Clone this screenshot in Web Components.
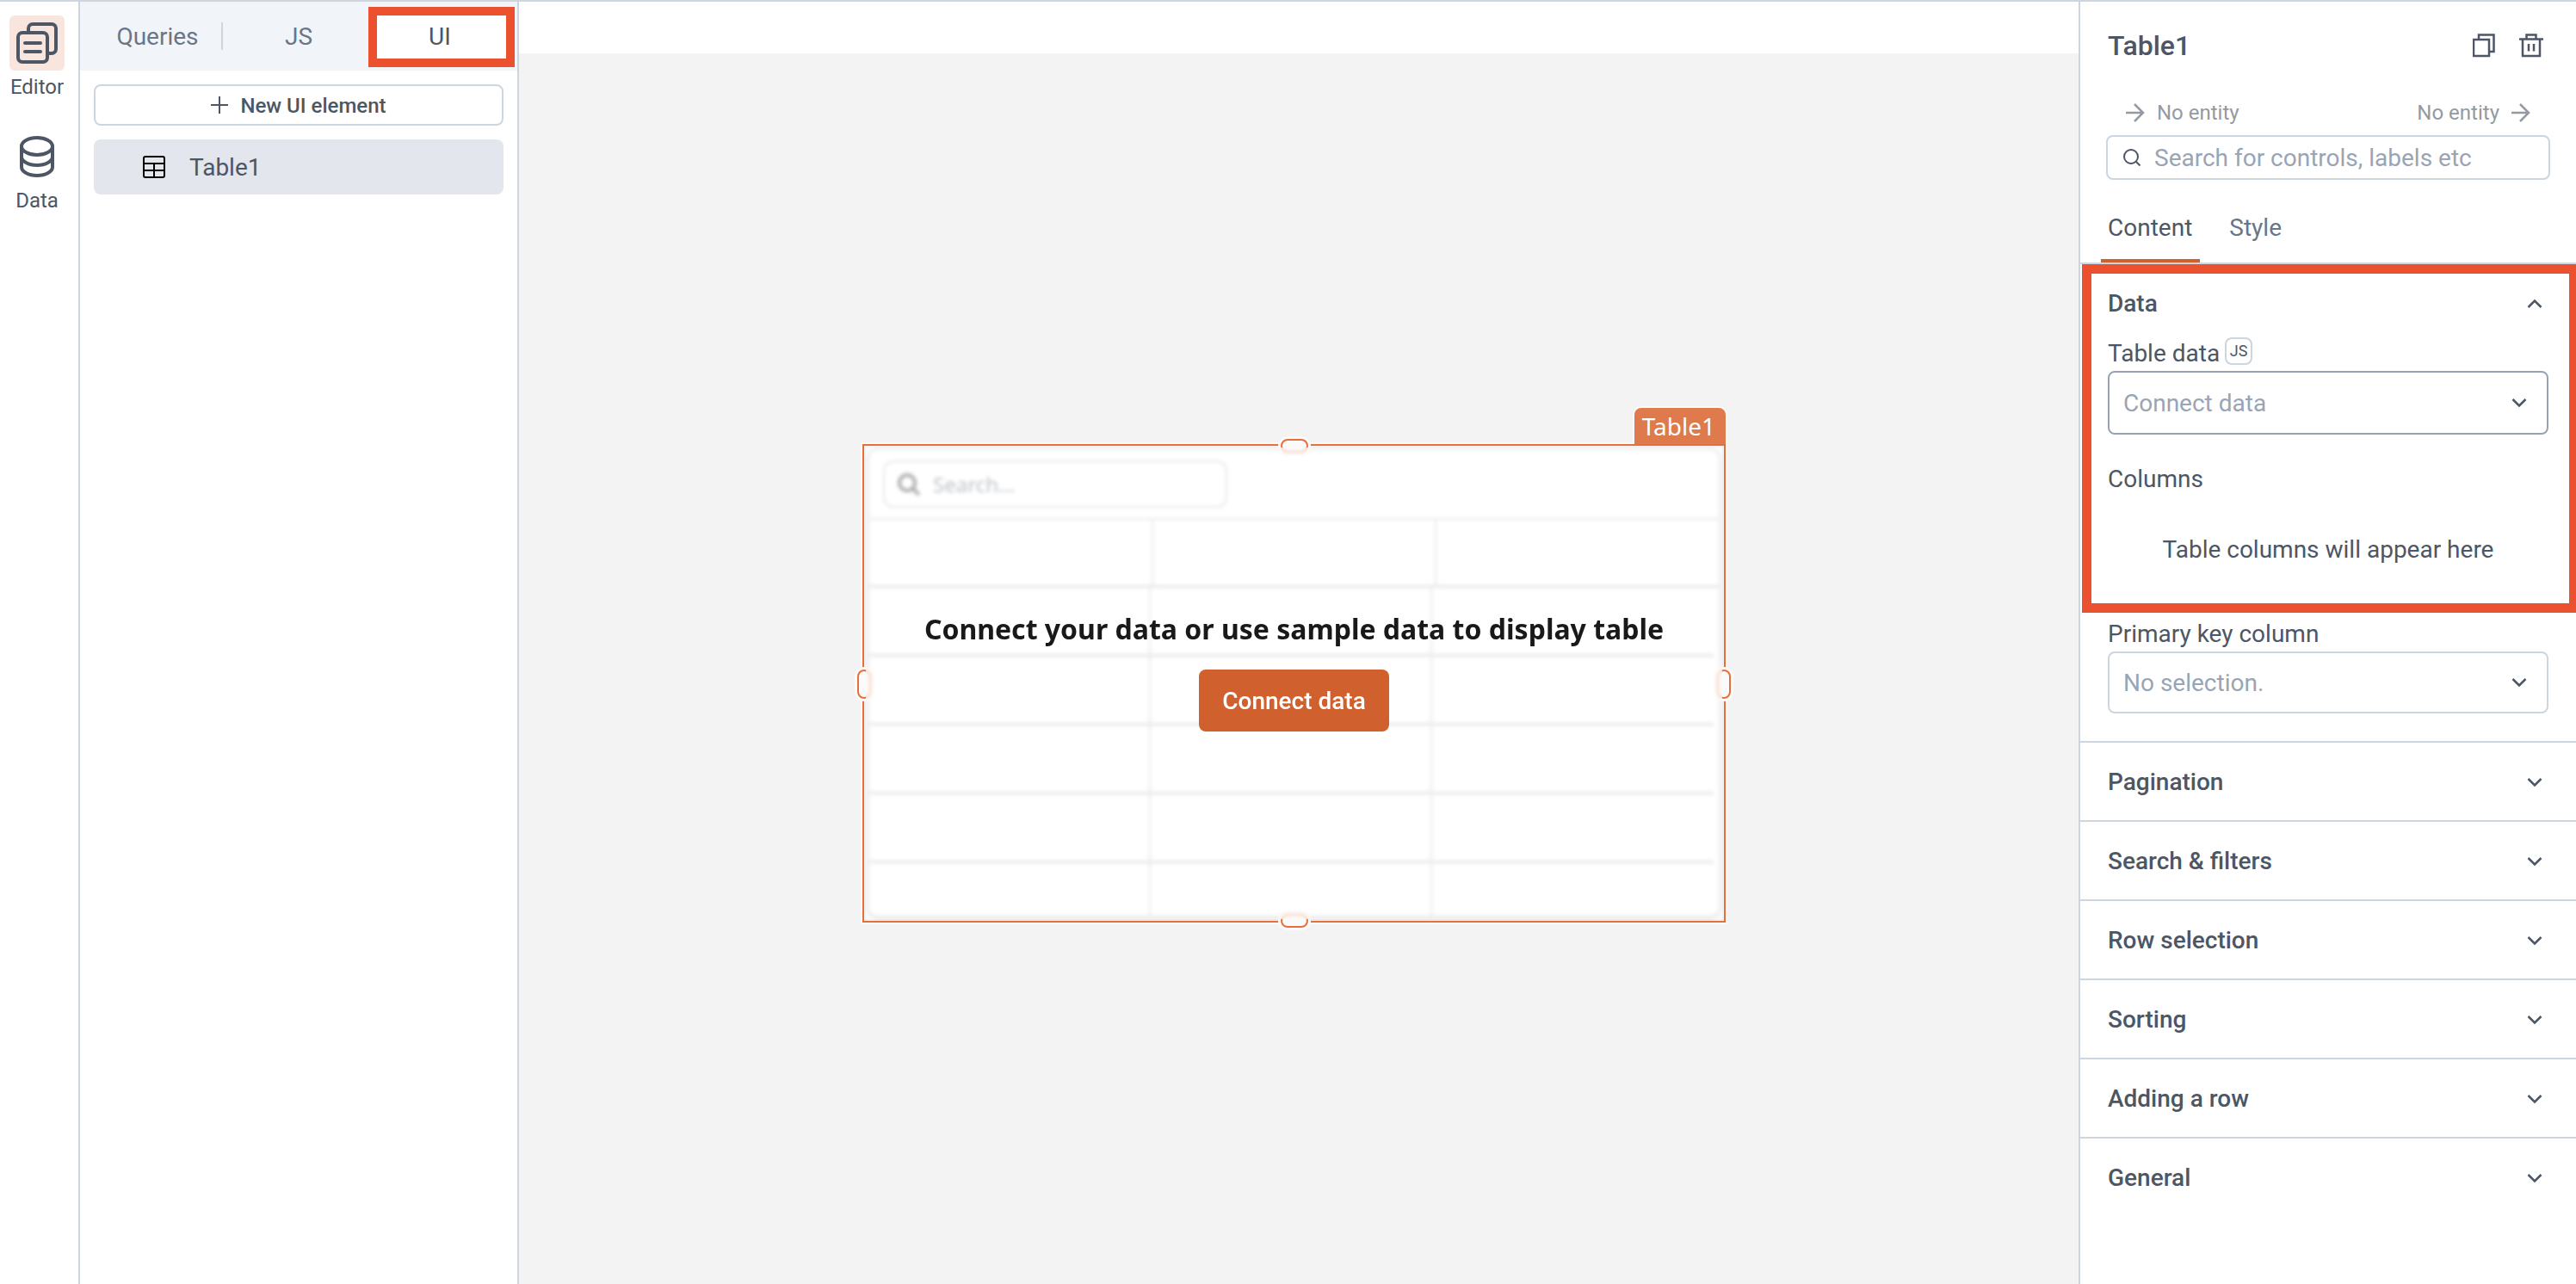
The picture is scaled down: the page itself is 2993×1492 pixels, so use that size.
<!DOCTYPE html>
<html lang="en">
<head>
<meta charset="utf-8">
<title>Table1 – UI editor</title>
<style>
  :root {
    --text: #4c5664;
    --muted: #6a7585;
    --placeholder: #99a4b5;
    --line: #cdd5df;
    --brand: #d0602e;
    --mark: #eb512e;
    --select: #e76f3c;
  }
  body { margin: 0; font: 400 28px/34px Roboto, "Noto Sans", sans-serif; color: var(--text); background: #fff; }
</style>
</head>
<body>
<app-shell>
  <side-rail slot="rail">
    <rail-item icon="pages" active>Editor</rail-item>
    <rail-item icon="database">Data</rail-item>
  </side-rail>
  <explorer-panel slot="explorer"></explorer-panel>
  <design-canvas slot="canvas"></design-canvas>
  <property-pane slot="props"></property-pane>
</app-shell>

<script>
const ICONS = {
  pages: [48, 48, '<g fill="none" stroke="currentColor" stroke-width="4" stroke-linecap="round"><rect x="2" y="12" width="34" height="34" rx="5"/><path d="M14 11V7a5 5 0 0 1 5-5h22a5 5 0 0 1 5 5v24a5 5 0 0 1-5 5h-3M10 24h18M10 34h18"/></g>'],
  database: [40, 48, '<g fill="none" stroke="currentColor" stroke-width="4"><ellipse cx="20" cy="12" rx="18" ry="10"/><path d="M2 12v24c0 5.500 8 10 18 10s18-4.500 18-10V12M2 24c0 5.500 8 10 18 10s18-4.500 18-10"/></g>'],
  plus: [20, 20, '<path d="M10 0v20M0 10h20" stroke="currentColor" stroke-width="2" fill="none"/>'],
  table: [26, 26, '<g fill="none" stroke="#000" stroke-width="2"><rect x="1" y="1" width="24" height="24" rx="2"/><path d="M1 9h24M1 17h24M13 9v16"/></g>'],
  copy: [26, 28, '<path d="M1 7h18v19H1zM7 7V1.500h17.500V21H19" fill="none" stroke="currentColor" stroke-width="2.500"/>'],
  trash: [28, 28, '<path d="M0 6.500h28M4 6.500V26h20V6.500M8.500 6V1.500h11V6M11 12v8.500M17 12v8.500" fill="none" stroke="currentColor" stroke-width="2.500"/>'],
  arrow: [22, 22, '<path d="M0 11h20M10 1l10 10-10 10" fill="none" stroke="currentColor" stroke-width="2.500"/>'],
  search: [20, 20, '<g fill="none" stroke="currentColor" stroke-width="2"><circle cx="9" cy="9" r="8"/><path d="M14.500 14.500L19.500 19.500"/></g>'],
  searchBold: [26, 26, '<g fill="none" stroke="currentColor" stroke-width="4"><circle cx="11" cy="11" r="9"/><path d="M17.500 17.500L25 25"/></g>'],
  down: [18, 12, '<path d="M1.500 2L9 9.500 16.500 2" fill="none" stroke="currentColor" stroke-width="2.500"/>'],
  up: [18, 12, '<path d="M1.500 10L9 2.500 16.500 10" fill="none" stroke="currentColor" stroke-width="2.500"/>']
};
const svg = n => `<svg width="${ICONS[n][0]}" height="${ICONS[n][1]}" viewBox="0 0 ${ICONS[n][0]} ${ICONS[n][1]}" aria-hidden="true">${ICONS[n][2]}</svg>`;
const BASE = `<style>
  *, *::before, *::after { box-sizing: border-box; }
  svg { display: block; flex: none; }
  button, input, select { font: inherit; color: inherit; margin: 0; padding: 0; border: 0; background: none; border-radius: 0; }
  p, h1, h2 { margin: 0; font: inherit; }
</style>`;
const define = (name, html) => customElements.define(name, class extends HTMLElement {
  constructor() {
    super();
    this.attachShadow({ mode: 'open' }).innerHTML = BASE + (typeof html === 'function' ? html(this) : html);
  }
});

define('app-shell', `<style>
  :host { display: grid; grid-template-columns: 93px 510px minmax(0, 1fr) 578px; min-height: 100vh; box-sizing: border-box; border-top: 2px solid var(--line); }
</style><slot name="rail"></slot><slot name="explorer"></slot><slot name="canvas"></slot><slot name="props"></slot>`);

define('side-rail', `<style>
  :host { display: block; border-right: 2px solid var(--line); }
  nav { display: flex; flex-direction: column; align-items: center; gap: 35px; padding: 16px 5px 0 0; }
</style><nav><slot></slot></nav>`);

define('rail-item', el => `<style>
  :host { display: block; }
  button { display: flex; flex-direction: column; align-items: center; gap: 5px; font-size: 24px; line-height: 28px; }
  .box { display: grid; place-items: center; width: 64px; height: 64px; border-radius: 6px; }
  :host([active]) .box { background: #f8e5de; }
</style><button type="button"><span class="box">${svg(el.getAttribute('icon'))}</span><slot></slot></button>`);

define('explorer-panel', `<style>
  :host { display: block; border-right: 2px solid var(--line); }
  .tabs { display: flex; height: 80px; padding: 0 8px; background: #f1f5fa; }
  .tabs button { position: relative; flex: 1; padding-top: 2px; color: var(--muted); }
  .tabs .first::after { content: ""; position: absolute; right: 6px; top: 24px; width: 2px; height: 32px; background: var(--line); }
  .tabs .on { color: var(--text); isolation: isolate; }
  .on::before { content: ""; position: absolute; z-index: -1; inset: 6px -5px 4px -1px; border: 10px solid var(--mark); background: #fff; }
  .list { display: flex; flex-direction: column; gap: 16px; padding: 16px; }
  .new { display: flex; align-items: center; justify-content: center; gap: 14px; height: 48px; border: 2px solid var(--line); border-radius: 8px; font-size: 24px; font-weight: 500; }
  .item { display: flex; align-items: center; gap: 28px; height: 64px; padding-left: 57px; border-radius: 8px; background: #e3e6ed; }
  .list span { padding-top: 2px; }
</style>
<div class="tabs" role="tablist">
  <button type="button" role="tab" class="first">Queries</button>
  <button type="button" role="tab">JS</button>
  <button type="button" role="tab" class="on" aria-selected="true">UI</button>
</div>
<div class="list">
  <button type="button" class="new">${svg('plus')}<span>New UI element</span></button>
  <button type="button" class="item">${svg('table')}<span>Table1</span></button>
</div>`);

define('design-canvas', `<style>
  :host { display: block; position: relative; padding-top: 60px; background: #fff; }
  .stage { position: relative; height: 100%; background: #f3f3f3; }
  table-widget { position: absolute; left: calc(50% - 507px); top: 454px; }
</style><div class="stage"><table-widget></table-widget></div>`);

define('table-widget', `<style>
  :host { display: block; width: 1003px; height: 556px; box-sizing: border-box; border: 2px solid var(--select); box-shadow: 0 0 0 2px #fafafa; font-family: "Noto Sans", sans-serif; }
  .tag { position: absolute; right: -2px; bottom: 100%; height: 44px; padding: 0 12px 0 9px; border-radius: 8px 8px 0 0; background: #de7a4b; box-shadow: 0 0 0 2px #fafafa; clip-path: inset(-2px -2px 2px -2px); color: #fff; line-height: 42px; }
  .table { height: 541px; margin: 5px 6px; border-radius: 10px; background: #fff; box-shadow: 0 0 0 1px #ccc, 0 1px 4px 1px #aaa; overflow: hidden; }
  .bar { height: 81px; padding: 12px 16px; border-bottom: 2px solid #cacaca; }
  .search { display: flex; align-items: center; gap: 15px; width: 400px; height: 55px; padding: 0 15px; border: 2px solid #c6c6c6; border-radius: 12px; color: #333; font-size: 24px; }
  input { flex: 1; min-width: 0; }
  input::placeholder { color: #5c6878; opacity: 1; }
  table { border-collapse: separate; border-spacing: 0; table-layout: fixed; }
  .head { width: 989px; }
  .body { width: 981px; }
  th, td { height: 80px; padding: 0; border-right: 2px solid #cacaca; border-bottom: 3px solid #c2c2c2; }
  th { height: 79px; }
  th:last-child, td:last-child { border-right: 0; }
  .handle { position: absolute; border: 2px solid var(--select); border-radius: 8px; background: #fafafa; box-shadow: 0 0 0 3px #fafafa; }
  .n, .s { width: 32px; height: 16px; left: calc(50% - 16px); }
  .e, .w { width: 16px; height: 34px; top: calc(50% - 16px); }
  .n { top: -8px; } .s { bottom: -8px; } .e { right: -8px; } .w { left: -8px; }
  .veil { position: absolute; inset: 2px; display: flex; flex-direction: column; align-items: center; gap: 23px; padding-top: 187px; background: rgba(255, 255, 255, .6); backdrop-filter: blur(2px); }
  h2 { color: #191919; font-size: 32px; line-height: 48px; font-weight: 700; white-space: nowrap; }
  .veil button { height: 72px; padding: 2px 27px 0; border-radius: 8px; background: var(--brand); color: #fff; font-family: Roboto, sans-serif; font-weight: 500; }
</style>
<div class="table">
  <div class="bar"><label class="search">${svg('searchBold')}<input type="text" placeholder="Search..." aria-label="Search"></label></div>
  <table class="head"><tr><th></th><th></th><th></th></tr></table>
  <table class="body">${'<tr><td></td><td></td><td></td></tr>'.repeat(5)}</table>
</div>
<div class="tag">Table1</div>
<span class="handle n"></span><span class="handle e"></span><span class="handle s"></span><span class="handle w"></span>
<div class="veil"><h2>Connect your data or use sample data to display table</h2><button type="button">Connect data</button></div>`);

define('select-field', el => `<style>
  :host { display: block; }
  .row { display: flex; align-items: flex-end; gap: 6px; }
  label { line-height: 26px; }
  .js { width: 32px; height: 32px; border: 2px solid var(--line); border-radius: 8px; font-size: 18px; line-height: 28px; }
  .wrap { display: grid; align-items: center; margin-top: 7px; }
  select { grid-area: 1 / 1; width: 100%; height: 72px; padding: 2px 16px 0; border: 2px solid var(--line); border-radius: 8px; appearance: none; background: #fff; color: var(--placeholder); }
  :host([strong]) select { height: 74px; border-color: #97a3b4; }
  svg { grid-area: 1 / 1; justify-self: end; margin-right: 25px; pointer-events: none; }
</style>
<div class="row"><label for="s">${el.getAttribute('label')}</label>${el.hasAttribute('js') ? '<button type="button" class="js">JS</button>' : ''}</div>
<div class="wrap"><select id="s"><option>${el.getAttribute('value')}</option></select>${svg('down')}</div>`);

define('pane-section', el => `<style>
  :host { display: block; }
  :host(:not([open])) { border-top: 2px solid var(--line); }
  button { display: flex; align-items: center; justify-content: space-between; width: 100%; padding: 28px 39px 27px 32px; line-height: 34px; font-weight: 500; }
  span { padding-top: 1px; }
  :host([open]) button { padding-bottom: 22px; }
</style><button type="button" aria-expanded="${el.hasAttribute('open')}"><span>${el.getAttribute('heading')}</span>${svg(el.hasAttribute('open') ? 'up' : 'down')}</button><slot></slot>`);

define('property-pane', `<style>
  :host { display: block; border-left: 2px solid var(--line); background: #fff; }
  header { display: flex; align-items: center; height: 102px; padding: 0 38px 0 32px; gap: 28px; }
  h1 { flex: 1; font-size: 32px; font-weight: 500; }
  .nav { display: flex; align-items: center; justify-content: space-between; height: 53px; padding: 0 53px; }
  .nav button { display: flex; align-items: center; gap: 14px; color: #939aa2; font-size: 24px; }
  .search { display: flex; align-items: center; gap: 16px; height: 52px; margin: 0 30px; padding: 0 18px; border: 2px solid var(--line); border-radius: 8px; }
  .search input { flex: 1; min-width: 0; padding-top: 2px; }
  input::placeholder { color: var(--placeholder); opacity: 1; }
  .tabs { display: flex; gap: 26px; margin-top: 14px; padding-left: 24px; border-bottom: 2px solid var(--line); }
  .tabs button { height: 82px; padding: 2px 9px 0 8px; border: solid transparent; border-width: 4px 0; color: var(--muted); }
  .tabs .on { border-bottom-color: var(--brand); color: var(--text); }
  .group { position: relative; padding-bottom: 59px; }
  .group::after { content: ""; position: absolute; inset: 0 0 0 2px; border: 11px solid var(--mark); border-right-width: 8px; pointer-events: none; }
  select-field { margin: 0 32px; width: 512px; }
  .cols { margin: 38px 32px 0; line-height: 28px; }
  .empty { margin: 54px 32px 0; line-height: 28px; text-align: center; }
  .key { margin-top: 12px; margin-bottom: 32px; }
</style>
<header><h1>Table1</h1><button type="button" aria-label="Copy">${svg('copy')}</button><button type="button" aria-label="Delete">${svg('trash')}</button></header>
<div class="nav"><button type="button">${svg('arrow')}<span>No entity</span></button><button type="button"><span>No entity</span>${svg('arrow')}</button></div>
<label class="search">${svg('search')}<input type="text" placeholder="Search for controls, labels etc" aria-label="Search for controls, labels etc"></label>
<div class="tabs" role="tablist"><button type="button" role="tab" class="on" aria-selected="true">Content</button><button type="button" role="tab">Style</button></div>
<div class="group">
  <pane-section heading="Data" open>
    <select-field label="Table data" value="Connect data" js strong></select-field>
    <p class="cols">Columns</p>
    <p class="empty">Table columns will appear here</p>
  </pane-section>
</div>
<select-field class="key" label="Primary key column" value="No selection."></select-field>
<pane-section heading="Pagination"></pane-section>
<pane-section heading="Search &amp; filters"></pane-section>
<pane-section heading="Row selection"></pane-section>
<pane-section heading="Sorting"></pane-section>
<pane-section heading="Adding a row"></pane-section>
<pane-section heading="General"></pane-section>`);
</script>
</body>
</html>
